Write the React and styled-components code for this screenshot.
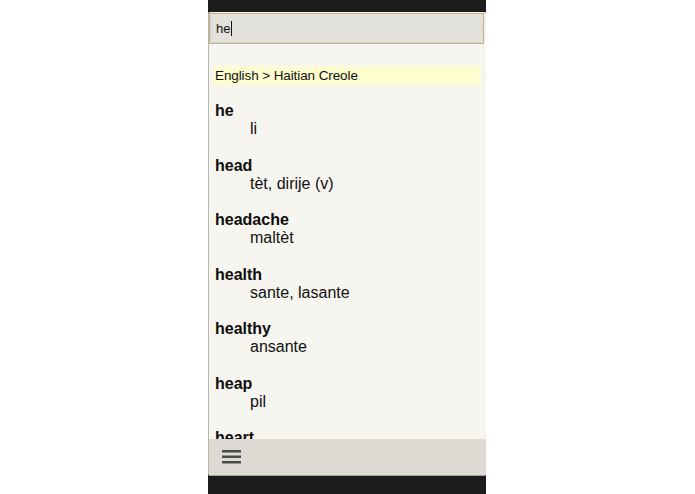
import React from "react";
import styled, { createGlobalStyle } from "styled-components";

const Global = createGlobalStyle`
  html, body { margin: 0; padding: 0; background: #ffffff; }
  body { font-family: "Liberation Sans", Arial, sans-serif; }
`;

const Page = styled.div`
  width: 695px;
  height: 494px;
  display: flex;
  padding-left: 208px;
  box-sizing: border-box;
  background: #ffffff;
`;

const Phone = styled.div`
  width: 278px;
  height: 494px;
  display: flex;
  flex-direction: column;
  background: #1c1c1c;
`;

const StatusBar = styled.div`
  height: 12px;
  flex-shrink: 0;
  background: #1c1c1c;
`;

const Screen = styled.div`
  flex: 1;
  display: flex;
  flex-direction: column;
  background: #f7f5ef;
  border-left: 1px solid #b9b6ae;
  border-radius: 2px 2px 3px 3px;
  overflow: hidden;
`;

const SearchArea = styled.div`
  padding: 1px 2px 4px 0;
  background: linear-gradient(#f1efe9, #f7f5ef);
`;

const SearchInput = styled.div`
  height: 31px;
  box-sizing: border-box;
  border: 1px solid #c9b27a;
  box-shadow: inset 1px -1px 0 0 #cfd8dc;
  background: #e3e1dc;
  display: flex;
  align-items: center;
  padding-left: 6px;
  font-size: 13px;
  color: #111;
`;

const Caret = styled.span`
  display: inline-block;
  width: 1px;
  height: 15px;
  background: #111;
  margin-left: 1px;
`;

const Results = styled.div`
  flex: 1;
  overflow: hidden;
  padding: 18px 5px 0 5px;
`;

const LangBar = styled.div`
  height: 19px;
  background: #fdfdcf;
  display: flex;
  align-items: center;
  padding-left: 1px;
  font-size: 13.5px;
  letter-spacing: -0.1px;
  color: #111;
  margin-bottom: 17px;
`;

const Entry = styled.div`
  display: flex;
  flex-direction: column;
  padding-left: 1px;
  margin-bottom: 18.5px;
`;

const Word = styled.div`
  font-weight: bold;
  font-size: 16px;
  line-height: 18px;
  color: #0d0d0d;
`;

const Meaning = styled.div`
  font-size: 16px;
  line-height: 18px;
  color: #111;
  padding-left: 35px;
`;

const Toolbar = styled.div`
  height: 36px;
  flex-shrink: 0;
  background: #dddad3;
  border-bottom: 1px solid #a8a6a0;
  display: flex;
  align-items: center;
  padding-left: 13px;
`;

const BottomBar = styled.div`
  height: 18px;
  flex-shrink: 0;
  background: #1c1c1c;
`;

const entries = [
  ["he", "li"],
  ["head", "tèt, dirije (v)"],
  ["headache", "maltèt"],
  ["health", "sante, lasante"],
  ["healthy", "ansante"],
  ["heap", "pil"],
  ["heart", "kè"],
];

function MenuIcon() {
  return (
    <svg width="19" height="16" viewBox="0 0 19 16">
      <rect x="0" y="1" width="19" height="2.5" fill="#4a4a4a" />
      <rect x="0" y="6.5" width="19" height="2.5" fill="#4a4a4a" />
      <rect x="0" y="12" width="19" height="2.5" fill="#4a4a4a" />
    </svg>
  );
}

export default function App() {
  return (
    <Page>
      <Global />
      <Phone>
        <StatusBar />
        <Screen>
          <SearchArea>
            <SearchInput>
              he<Caret />
            </SearchInput>
          </SearchArea>
          <Results>
            <LangBar>English &gt; Haitian Creole</LangBar>
            {entries.map(([w, m]) => (
              <Entry key={w}>
                <Word>{w}</Word>
                <Meaning>{m}</Meaning>
              </Entry>
            ))}
          </Results>
          <Toolbar>
            <MenuIcon />
          </Toolbar>
        </Screen>
        <BottomBar />
      </Phone>
    </Page>
  );
}
